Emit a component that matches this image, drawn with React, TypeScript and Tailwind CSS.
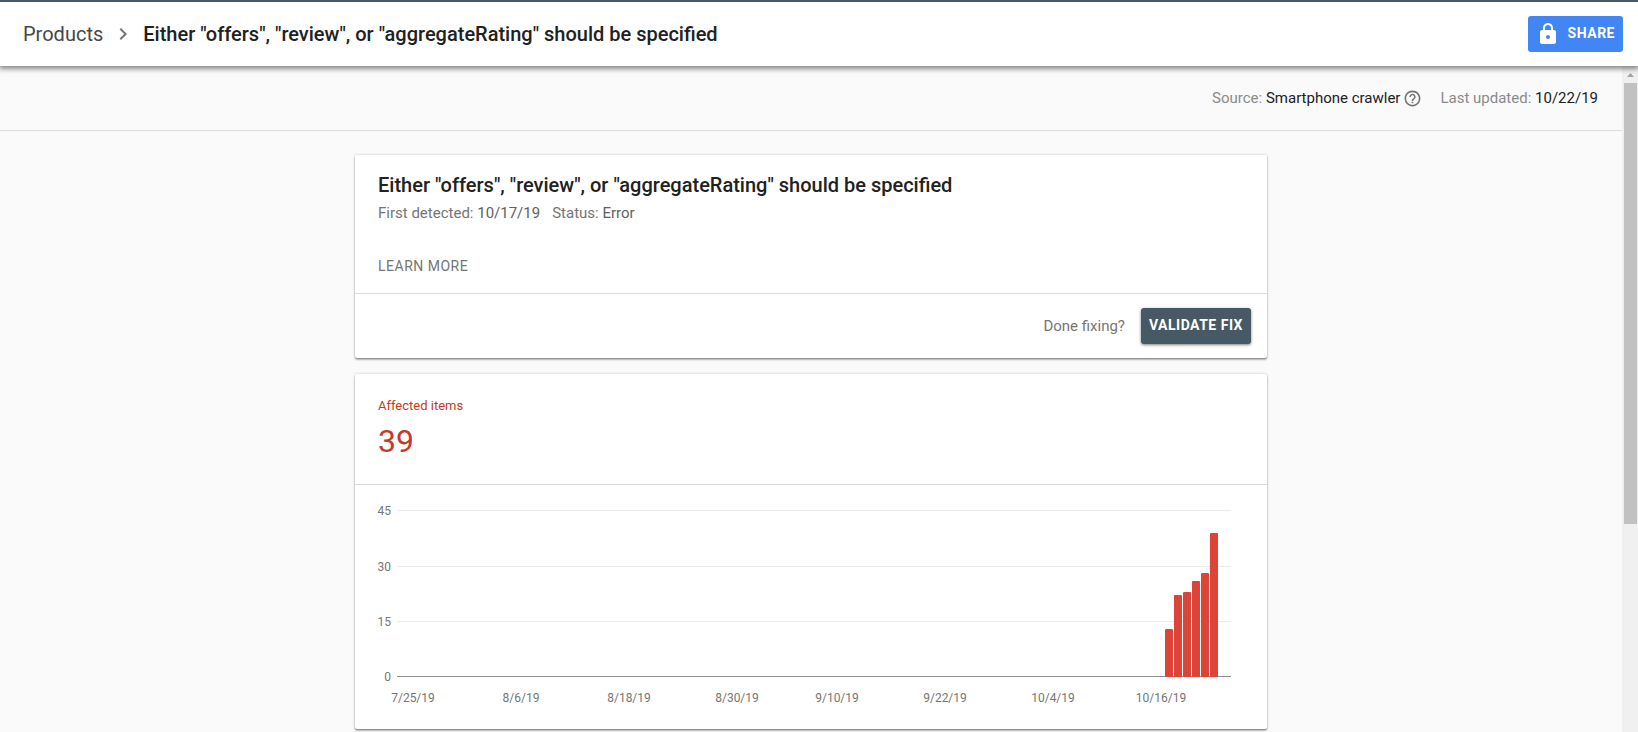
import React from "react";

const bars = [
  { x: 810, value: 13, top: 144 },
  { x: 819, value: 22, top: 110 },
  { x: 828, value: 23, top: 107 },
  { x: 837, value: 26, top: 96 },
  { x: 846, value: 28, top: 88 },
  { x: 855, value: 39, top: 48 },
];

const gridLines = [
  { label: "45", y: 25 },
  { label: "30", y: 81 },
  { label: "15", y: 136 },
  { label: "0", y: 191 },
];

const dates = [
  { label: "7/25/19", x: 58 },
  { label: "8/6/19", x: 166 },
  { label: "8/18/19", x: 274 },
  { label: "8/30/19", x: 382 },
  { label: "9/10/19", x: 482 },
  { label: "9/22/19", x: 590 },
  { label: "10/4/19", x: 698 },
  { label: "10/16/19", x: 806 },
];

const cardClass =
  "w-full max-w-[912px] rounded-xs bg-white shadow-[0_2px_2px_0_rgba(0,0,0,0.24),0_0_3px_0_rgba(0,0,0,0.2),0_1px_1px_0_rgba(0,0,0,0.2)]";

function Header() {
  return (
    <header className="z-10 flex h-[66px] shrink-0 items-center border-t-2 border-[#455a64] bg-white pl-[23px] pr-[15px] shadow-[0_2px_5px_1px_rgba(0,0,0,0.45)]">
      <nav aria-label="Breadcrumb" className="flex items-center text-xl leading-7">
        <a href="#products" className="text-[#484848]">
          Products
        </a>
        <svg viewBox="0 0 24 24" className="mx-2 size-6 fill-[#757575]" aria-hidden="true">
          <path d="M10 6 8.59 7.41 13.17 12l-4.58 4.59L10 18l6-6z" />
        </svg>
        <span className="font-medium text-[#212121]">
          Either "offers", "review", or "aggregateRating" should be specified
        </span>
      </nav>
      <button
        type="button"
        className="ml-auto flex h-9 items-center gap-2 rounded-[3px] bg-[#4285f4] px-2 text-sm font-bold tracking-[0.5px] text-white"
      >
        <svg viewBox="0 0 24 24" className="size-6 fill-current" aria-hidden="true">
          <path d="M18 8h-1V6c0-2.760-2.240-5-5-5S7 3.240 7 6v2H6c-1.100 0-2 .9-2 2v10c0 1.100.9 2 2 2h12c1.100 0 2-.9 2-2V10c0-1.100-.9-2-2-2zm-6 9c-1.100 0-2-.9-2-2s.9-2 2-2 2 .9 2 2-.9 2-2 2zm3.100-9H8.900V6c0-1.710 1.390-3.100 3.100-3.100s3.100 1.390 3.100 3.100v2z" />
        </svg>
        <span className="pb-0.5">SHARE</span>
      </button>
    </header>
  );
}

function ScrollTrack() {
  return (
    <div aria-hidden="true" className="flex w-4 shrink-0 flex-col bg-[#f0f0f0] pl-0.5 pr-px">
      <div className="flex h-[17px] shrink-0 items-center justify-center">
        <svg viewBox="0 0 7 4" className="h-1 w-[7px] fill-[#a3a3a3]">
          <path d="M3.500 0 7 4H0z" />
        </svg>
      </div>
      <div className="min-h-0 flex-1">
        <div className="h-[68%] bg-[#c1c1c1]" />
      </div>
    </div>
  );
}

function MetaBar() {
  return (
    <div className="flex h-[65px] items-center justify-end border-b border-[#dcdcdc] pr-6 text-[15px] leading-5 text-[#8a8a8a]">
      <span>
        Source: <span className="text-[#212121]">Smartphone crawler</span>
      </span>
      <svg viewBox="0 0 24 24" className="ml-[3px] size-[19px] fill-[#757575]" aria-hidden="true">
        <path d="M11 18h2v-2h-2v2zm1-16C6.480 2 2 6.480 2 12s4.480 10 10 10 10-4.480 10-10S17.520 2 12 2zm0 18c-4.410 0-8-3.590-8-8s3.590-8 8-8 8 3.590 8 8-3.590 8-8 8zm0-14c-2.210 0-4 1.790-4 4h2c0-1.100.9-2 2-2s2 .9 2 2c0 2-3 1.750-3 5h2c0-2.250 3-2.500 3-5 0-2.210-1.790-4-4-4z" />
      </svg>
      <span className="ml-[18px]">
        Last updated: <span className="text-[#212121]">10/22/19</span>
      </span>
    </div>
  );
}

function IssueCard() {
  return (
    <section className={cardClass}>
      <div className="px-[23px] pb-[15px] pt-4">
        <h1 className="text-xl font-medium leading-7 text-[#212121]">
          Either "offers", "review", or "aggregateRating" should be specified
        </h1>
        <div className="mt-1 flex gap-3 text-[15px] leading-5 text-[#757575]">
          <span>
            First detected: <span className="text-[#616161]">10/17/19</span>
          </span>
          <span>
            Status: <span className="text-[#616161]">Error</span>
          </span>
        </div>
        <a
          href="#learn-more"
          className="mt-[31px] inline-block align-top text-sm leading-6 tracking-[0.5px] text-[#757575]"
        >
          LEARN MORE
        </a>
      </div>
      <div className="flex h-[65px] items-center justify-end gap-4 border-t border-[#dcdcdc] pr-4">
        <span className="text-[15px] leading-5 text-[#757575]">Done fixing?</span>
        <button
          type="button"
          className="h-9 rounded-[3px] bg-[#455a64] px-2 pb-0.5 text-sm font-bold tracking-[0.5px] text-white shadow-[0_1px_3px_0_rgba(0,0,0,0.5)]"
        >
          VALIDATE FIX
        </button>
      </div>
    </section>
  );
}

function Chart() {
  return (
    <svg
      viewBox="0 0 912 244"
      className="block w-full fill-[#757575] text-xs"
      role="img"
      aria-label="Affected items by day"
    >
      {gridLines.map((line) => (
        <g key={line.label}>
          <text x={36} y={line.y + 5} textAnchor="end">
            {line.label}
          </text>
          <rect
            x={42}
            y={line.y}
            width={834}
            height={1}
            className={line.label === "0" ? "fill-[#8f8f8f]" : "fill-[#ebebeb]"}
          />
        </g>
      ))}
      {bars.map((bar) => (
        <path
          key={bar.x}
          d={`M${bar.x} 192V${bar.top + 1}q0-1 1-1h6q1 0 1 1V192z`}
          className="fill-[#db4437]"
        />
      ))}
      {dates.map((date) => (
        <text key={date.label} x={date.x} y={217} textAnchor="middle">
          {date.label}
        </text>
      ))}
    </svg>
  );
}

function AffectedCard() {
  return (
    <section className={cardClass}>
      <div className="border-b border-[#dcdcdc] px-[23px] pb-6 pt-6 text-[#c53929]">
        <h2 className="text-[13px] leading-4">Affected items</h2>
        <p className="mt-2 text-[32px] leading-[38px]">39</p>
      </div>
      <Chart />
    </section>
  );
}

export default function App() {
  return (
    <div className="flex h-screen flex-col overflow-hidden bg-[#fafafa] font-[Roboto,sans-serif]">
      <Header />
      <div className="flex min-h-0 flex-1">
        <main className="min-w-0 flex-1 overflow-hidden">
          <MetaBar />
          <div className="flex flex-col items-center gap-4 py-6">
            <IssueCard />
            <AffectedCard />
          </div>
        </main>
        <ScrollTrack />
      </div>
    </div>
  );
}
